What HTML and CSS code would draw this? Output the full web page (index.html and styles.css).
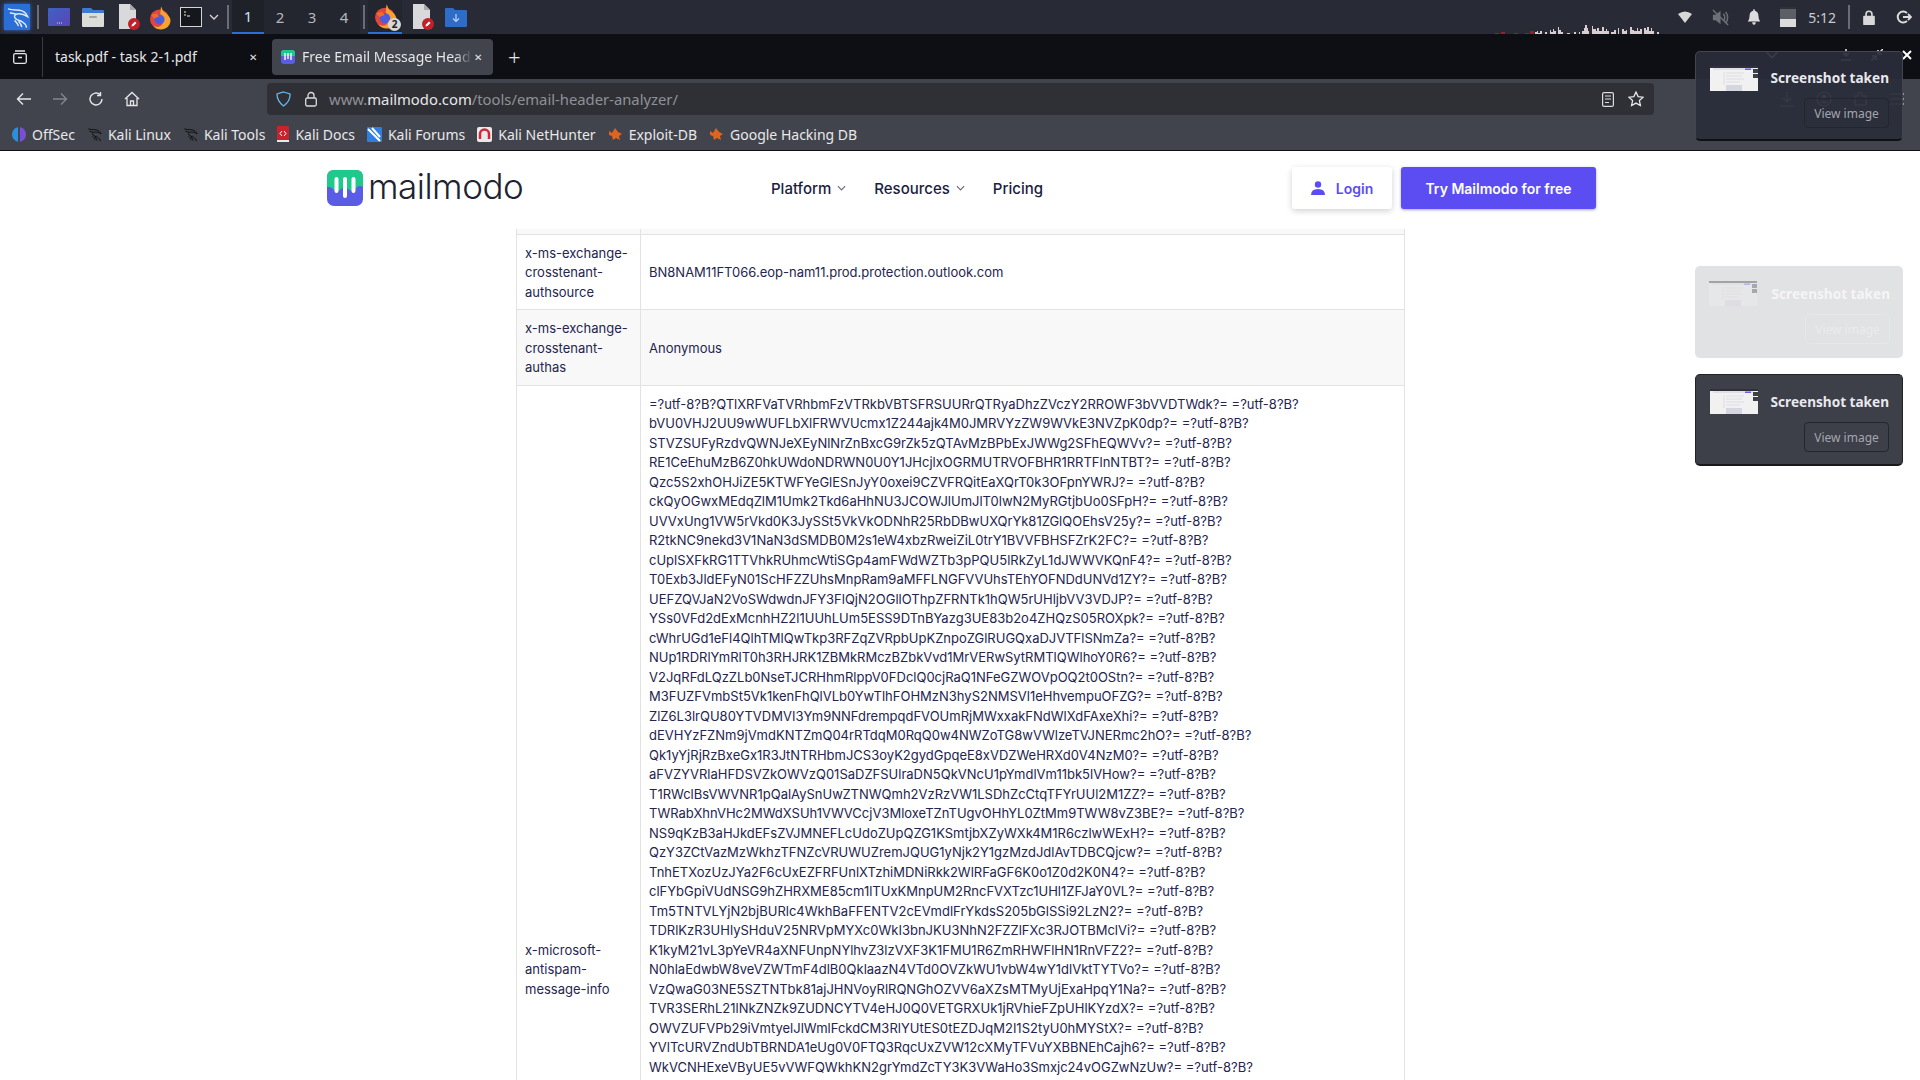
FILE: index.html
```html
<!DOCTYPE html>
<html lang = "en">

<head>
  <meta charset = "UTF-8">
  <meta name = "viewport" content = "width=device-width, initial-scale=1.0">
  <title> Free Email Message Header Analyzer </title>
  <link rel = "stylesheet" href = "styles.css">
</head>

<body>

  <svg class = "defs" width = "0" height = "0">
    <symbol id = "kali" viewBox = "0 0 24 24">
      <path d = "M2 3c5 1.500 8 1 12 1.500 4 .5 7 3 8.500 6.500-3-2-6-3-9-3-3 0-5 1.500-4.500 3.500.5 2.500 5 3.500 8 5 2.500 1.300 4 3.500 4.500 6M4 7c2 .5 4 1 6 1M13 16c1.500 1.500 3 3.500 3.500 6M9 15c2 2 3 3 4 6" fill = "none" stroke = "currentColor" stroke-width = "1.500"/>
    </symbol>
    <symbol id = "firefox" viewBox = "0 0 24 24">
      <circle cx = "11.500" cy = "13.500" r = "9.500" fill = "#e0463c"/>
      <path d = "M13 1c2 3 1 4 4 6 3 2 5.500 5 5.500 8 0 5-4.500 9-9.500 9-3 0-6-1-8-4 3 2 7 2 9-1 2-3 1-7-2-8 .5-3 .5-7 1-10z" fill = "#f7a130"/>
      <circle cx = "11.500" cy = "14" r = "5" fill = "#4d5be0"/>
      <path d = "M3 9c2 0 4-1 6-1l2 3-5 2z" fill = "#f36a2b"/>
    </symbol>
    <symbol id = "doc" viewBox = "0 0 24 28">
      <path d = "M3 1h11l6 6v19H3z" fill = "#d9d9dc"/>
      <path d = "M14 1l6 6h-6z" fill = "#a9a9ad"/>
      <circle cx = "18" cy = "21" r = "6" fill = "#c0202a"/>
      <path d = "M15.500 23.500l.5-2 3-3 1.500 1.500-3 3z" fill = "#fff"/>
    </symbol>
    <symbol id = "caret" viewBox = "0 0 10 6">
      <path d = "M1 1l4 4 4-4" fill = "none" stroke = "currentColor" stroke-width = "1.300"/>
    </symbol>
    <symbol id = "shot" viewBox = "0 0 48 25">
      <rect width = "48" height = "25" fill = "#f1f1f2"/>
      <rect width = "48" height = "2" fill = "#30313a"/>
      <rect x = "3" y = "2.500" width = "40" height = "1" fill = "#d0d0d6"/>
      <rect x = "35" y = "2.500" width = "6" height = "1.500" fill = "#6a5cf0"/>
      <rect x = "43" y = "3" width = "5" height = "4" fill = "#3d3f49"/>
      <rect x = "43" y = "8" width = "5" height = "4" fill = "#3d3f49"/>
      <path d = "M14 6v13M16 7h18M16 10h16M16 13h18M16 16h14" stroke = "#d4d4da" stroke-width = ".7"/>
      <rect x = "16" y = "19" width = "16" height = "6" fill = "#d6d6e0"/>
    </symbol>
  </svg>

  <div class = "panel">
    <div class = "panel-left">
      <div class = "kali-btn"><svg width = "23" height = "23"><use href = "#kali"/></svg></div>
      <span class = "panel-sep sep-first"></span>
      <div class = "launcher">
        <svg width = "22" height = "18" viewBox = "0 0 22 18"><defs><linearGradient id = "desk" x1 = "0" y1 = "0" x2 = "1" y2 = "1"><stop offset = "0" stop-color = "#3d63c4"/><stop offset = "1" stop-color = "#5a45b4"/></linearGradient></defs><rect width = "22" height = "18" rx = "1" fill = "url(#desk)"/><path d = "M9 15h1M11 15h1M13 15h1" stroke = "#ddd"/></svg>
        <svg width = "22" height = "20" viewBox = "0 0 22 20"><path d = "M0 2q0-1 1-1h8l2 2h10q1 0 1 1v3H0z" fill = "#3d7bd0"/><path d = "M0 6h22v13q0 1-1 1H1q-1 0-1-1z" fill = "#dcdcd8"/><rect x = "7" y = "9" width = "8" height = "2" rx = "1" fill = "#a5a5a2"/></svg>
        <svg width = "24" height = "28"><use href = "#doc"/></svg>
        <svg class = "tight" width = "24" height = "25"><use href = "#firefox"/></svg>
        <svg class = "tight" width = "22" height = "20" viewBox = "0 0 22 20"><rect x = ".5" y = ".5" width = "21" height = "19" fill = "#16171c" stroke = "#d5d5d5"/><path d = "M4 5h2M4 8h2M7 9h3" stroke = "#eee" stroke-width = "1.200"/></svg>
        <svg class = "panel-caret" width = "10" height = "6"><use href = "#caret"/></svg>
      </div>
      <span class = "panel-sep sep-mid"></span>
      <div class = "workspaces">
        <span class = "ws ws-on">1</span>
        <span class = "ws">2</span>
        <span class = "ws">3</span>
        <span class = "ws">4</span>
      </div>
      <span class = "panel-sep"></span>
      <div class = "tasks">
        <div class = "task task-on">
          <svg width = "25" height = "26"><use href = "#firefox"/></svg>
          <span class = "task-count">2</span>
        </div>
        <div class = "task"><svg width = "24" height = "28"><use href = "#doc"/></svg></div>
        <div class = "task">
          <svg width = "22" height = "20" viewBox = "0 0 22 20"><path d = "M0 2q0-1 1-1h7l2 2h11q1 0 1 1v15q0 1-1 1H1q-1 0-1-1z" fill = "#2f6cc8"/><path d = "M11 7v7M8 11.500l3 3 3-3" fill = "none" stroke = "#bcd4f2" stroke-width = "1.200"/></svg>
        </div>
      </div>
    </div>

    <div class = "panel-right">
      <svg class = "net-graph" width = "170" height = "10" viewBox = "0 0 170 10">
        <path d = "M0 9h4v1H0zM6 8h4v2H6zM19 9h4v1h-4zM30 9h4v1h-4zM35 7h4v3h-4z" fill = "#a01c28"/>
        <path d = "M40 10V8h2V7h1v2h2V7h2v3h3V8h2v2h3V6h1v2h2V5h1v2h2v3h2V3h1v3h2v2h2v2h4V9h3v1h4V8h2v2h3V8h1v2h2V7h2V4h1V1h2v3h1v3h1v3h3V2h1v3h3v2h1V4h2v3h3V3h2v4h2V5h1v2h2v3h2V8h3V6h2v4h2V4h1v6h3V5h2v2h2V6h1v4h3V3h2v3h2V7h3V4h1v3h2V5h2v5h2V4h2v2h1V3h2v4h2V4h1v3h2v3h3V8h2v2z" fill = "#d9cdcf"/>
      </svg>
      <svg class = "tray-wifi" width = "14" height = "12" viewBox = "0 0 14 12"><path d = "M0 3q7-5 14 0L7 12z" fill = "#d8d8d8"/></svg>
      <svg class = "tray-mute" width = "19" height = "19" viewBox = "0 0 20 20"><path d = "M2 7h3l5-4v14l-5-4H2z" fill = "#6e7078"/><path d = "M13 6q3 4 0 8M15.500 4q4 6 0 12M2 2l16 16" fill = "none" stroke = "#6e7078" stroke-width = "1.500"/></svg>
      <svg class = "tray-bell" width = "14" height = "16" viewBox = "0 0 14 18"><path d = "M7 0q1 0 1 2 4 1 4 6 0 4 2 6H0q2-2 2-6 0-5 4-6 0-2 1-2zM5 15h4q0 3-2 3t-2-3z" fill = "#dcdcdc"/></svg>
      <div class = "battery"><span></span></div>
      <span class = "clock">5:12</span>
      <span class = "panel-sep tray-sep"></span>
      <svg class = "tray-lock" width = "14" height = "15" viewBox = "0 0 14 18"><path d = "M3.500 8V5a3.500 3.500 0 0 1 7 0v3" fill = "none" stroke = "#d8d8d8" stroke-width = "2"/><rect y = "7" width = "14" height = "11" rx = "1" fill = "#d8d8d8"/></svg>
      <svg class = "tray-out" width = "16" height = "14" viewBox = "0 0 16 14"><path d = "M11 3a5.500 5.500 0 1 0 0 8" fill = "none" stroke = "#dcdcdc" stroke-width = "2"/><path d = "M7 7h8M12 4l3 3-3 3" fill = "none" stroke = "#dcdcdc" stroke-width = "1.800"/></svg>
    </div>
  </div>

  <div class = "tabbar">
    <div class = "tab-tool">
      <svg width = "14" height = "14" viewBox = "0 0 14 14"><rect x = ".7" y = "3.700" width = "12.600" height = "9.600" rx = "1.500" fill = "none" stroke = "#e6e6e8" stroke-width = "1.300"/><path d = "M2 1h10M5 7.500h4" stroke = "#e6e6e8" stroke-width = "1.300"/></svg>
    </div>
    <div class = "tab">
      <span class = "tab-title"> task.pdf - task 2-1.pdf </span>
      <span class = "tab-x"> &#10005; </span>
    </div>
    <div class = "tab tab-on">
      <svg class = "fav" width = "14" height = "14" viewBox = "0 0 14 14"><rect width = "14" height = "14" rx = "3" fill = "#5a5ce6"/><path d = "M0 3q0-3 3-3h8q3 0 3 3v3H0z" fill = "#1fc98c"/><path d = "M4 3v7M7 3v6M10 3v7" stroke = "#fff" stroke-width = "1.400"/></svg>
      <span class = "tab-title tab-fade"> Free Email Message Head </span>
      <span class = "tab-x"> &#10005; </span>
    </div>
    <span class = "tab-plus"> + </span>
    <div class = "win-btns">
      <svg class = "win-caret" width = "14" height = "8"><use href = "#caret"/></svg>
      <svg class = "win-min" width = "12" height = "12" viewBox = "0 0 12 12"><path d = "M6 0v7M3 4l3 3 3-3M1 11h10" fill = "none" stroke = "#e6e6e8" stroke-width = "1.500"/></svg>
      <svg class = "win-max" width = "12" height = "12" viewBox = "0 0 12 12"><path d = "M12 0L7 5M7 1v4h4M0 12l5-5M1 7h4v4" fill = "none" stroke = "#e6e6e8" stroke-width = "1.500"/></svg>
      <svg class = "win-max" width = "10" height = "10" viewBox = "0 0 10 10"><path d = "M1 1l8 8M9 1L1 9" stroke = "#fff" stroke-width = "2"/></svg>
    </div>
  </div>

  <div class = "navbar">
    <svg class = "nav-ic" width = "16" height = "14" viewBox = "0 0 16 14"><path d = "M15 7H1.500M7 1.500L1.500 7 7 12.500" fill = "none" stroke = "#e6e6e8" stroke-width = "1.400"/></svg>
    <svg class = "nav-ic" width = "16" height = "14" viewBox = "0 0 16 14"><path d = "M1 7h13.500M9 1.500L14.500 7 9 12.500" fill = "none" stroke = "#84858c" stroke-width = "1.400"/></svg>
    <svg class = "nav-ic" width = "16" height = "16" viewBox = "0 0 16 16"><path d = "M14 8a6 6 0 1 1-2-4.500M12.500 1v3.500H9" fill = "none" stroke = "#e6e6e8" stroke-width = "1.400"/></svg>
    <svg class = "nav-ic" width = "16" height = "16" viewBox = "0 0 16 16"><path d = "M1 8l7-6.500L15 8M3 7v7.500h10V7M6.500 14.500V10h3v4.500" fill = "none" stroke = "#e6e6e8" stroke-width = "1.300"/></svg>
    <div class = "urlbar">
      <svg width = "15" height = "16" viewBox = "0 0 15 16"><path d = "M7.500 1L14 3q.5 7-6.500 12Q1 10 1 3z" fill = "none" stroke = "#66b8ee" stroke-width = "1.300"/></svg>
      <svg class = "lock" width = "12" height = "16" viewBox = "0 0 12 16"><path d = "M3 7V4.500a3 3 0 0 1 6 0V7" fill = "none" stroke = "#dcdcdf" stroke-width = "1.300"/><rect x = ".7" y = "7" width = "10.600" height = "8" rx = "1.500" fill = "none" stroke = "#dcdcdf" stroke-width = "1.300"/></svg>
      <span class = "url"> www.<b class = "url-host">mailmodo.com</b>/tools/email-header-analyzer/ </span>
      <svg class = "url-end" width = "12" height = "15" viewBox = "0 0 12 15"><rect x = ".6" y = ".6" width = "10.800" height = "13.800" rx = "1.500" fill = "none" stroke = "#dcdcdf" stroke-width = "1.200"/><path d = "M3 4h6M3 7h6M3 10.500h4" stroke = "#dcdcdf" stroke-width = "1.200"/></svg>
      <svg class = "star" width = "16" height = "16" viewBox = "0 0 16 16"><path d = "M8 1l2.100 4.600 5 .6-3.700 3.400 1 5L8 12.100 3.600 14.600l1-5L.9 6.200l5-.6z" fill = "none" stroke = "#e6e6e8" stroke-width = "1.300"/></svg>
    </div>
    <div class = "nav-right">
      <svg width = "16" height = "16" viewBox = "0 0 16 16"><path d = "M8 1v10M4 7l4 4 4-4M1 15h14" fill = "none" stroke = "#e6e6e8" stroke-width = "1.200"/></svg>
      <svg width = "16" height = "16" viewBox = "0 0 16 16"><circle cx = "8" cy = "8" r = "7" fill = "none" stroke = "#e6e6e8" stroke-width = "1.200"/><circle cx = "8" cy = "6" r = "2.500" fill = "#e6e6e8"/><path d = "M3.500 12q4.500-3.500 9 0" fill = "#e6e6e8"/></svg>
      <svg width = "16" height = "16" viewBox = "0 0 16 16"><path d = "M2 5h3V3a2 2 0 0 1 4 0v2h4v9H2z" fill = "none" stroke = "#e6e6e8" stroke-width = "1.200"/></svg>
      <svg width = "14" height = "12" viewBox = "0 0 14 12"><path d = "M0 1h14M0 6h14M0 11h14" stroke = "#e6e6e8" stroke-width = "1.200"/></svg>
    </div>
  </div>

  <div class = "bookmarks">
    <span class = "mark"><svg width = "14" height = "15" viewBox = "0 0 14 15"><path d = "M6 0v15Q0 13 0 7.500T6 0z" fill = "#2b8fdc"/><path d = "M8 0v15q6-2 6-7.500T8 0z" fill = "#7a4fd8"/></svg> OffSec </span>
    <span class = "mark"><svg class = "k-ic" width = "15" height = "15"><use href = "#kali"/></svg> Kali Linux </span>
    <span class = "mark"><svg class = "k-ic" width = "15" height = "15"><use href = "#kali"/></svg> Kali Tools </span>
    <span class = "mark"><svg width = "12" height = "16" viewBox = "0 0 12 16"><rect width = "12" height = "15" rx = "1" fill = "#c8232c"/><path d = "M0 14h12v2H0z" fill = "#e8e8e8"/><path d = "M5 5L3 7.500 5 10M7 5l2 2.500L7 10" fill = "none" stroke = "#fff"/></svg> Kali Docs </span>
    <span class = "mark"><svg width = "15" height = "15" viewBox = "0 0 15 15"><rect width = "15" height = "15" rx = "1" fill = "#2f7fe0"/><path d = "M1 2l12 12M5 1l8 9" stroke = "#fff" stroke-width = "2"/></svg> Kali Forums </span>
    <span class = "mark"><svg width = "15" height = "15" viewBox = "0 0 15 15"><rect width = "15" height = "15" rx = "2" fill = "#e9e9e9"/><path d = "M3 12V7a4.500 4.500 0 0 1 9 0v5" fill = "none" stroke = "#d02838" stroke-width = "2.500"/></svg> Kali NetHunter </span>
    <span class = "mark"><svg width = "15" height = "14" viewBox = "0 0 15 14"><path d = "M1 4l3 2 3-5 3 4 4 2-3 2 1 4-4-2-3 2-1-4-3-1z" fill = "#e0641e"/></svg> Exploit-DB </span>
    <span class = "mark"><svg width = "15" height = "14" viewBox = "0 0 15 14"><path d = "M1 4l3 2 3-5 3 4 4 2-3 2 1 4-4-2-3 2-1-4-3-1z" fill = "#e0641e"/></svg> Google Hacking DB </span>
  </div>

  <div class = "page">
    <div class = "site-head">
      <div class = "logo">
        <svg width = "36" height = "36" viewBox = "0 0 36 36">
          <rect width = "36" height = "36" rx = "7" fill = "#5a5ce6"/>
          <path d = "M0 17V7q0-7 7-7h22q7 0 7 7v10c-3-2-5-1-7 1-3 3-6 3-8 1s-5-2-7 0-6 2-8 0-4-2-6-2z" fill = "#1fc98c"/>
          <path d = "M9.500 9v12M18 9v17M26.500 9v12" stroke = "#fff" stroke-width = "4" stroke-linecap = "round"/>
        </svg>
        <span class = "logo-text"> mailmodo </span>
      </div>
      <nav class = "site-nav">
        <a class = "site-link"> Platform <svg width = "9" height = "6"><use href = "#caret"/></svg></a>
        <a class = "site-link"> Resources <svg width = "9" height = "6"><use href = "#caret"/></svg></a>
        <a class = "site-link"> Pricing </a>
      </nav>
      <div class = "head-btns">
        <a class = "btn-login">
          <svg width = "14" height = "14" viewBox = "0 0 14 14"><circle cx = "7" cy = "3.500" r = "3.200" fill = "#5b4df2"/><path d = "M0 14q0-6 7-6t7 6z" fill = "#5b4df2"/></svg>
          Login
        </a>
        <a class = "btn-try"> Try Mailmodo for free </a>
      </div>
    </div>

    <table class = "headers">
      <tr class = "row-alt row-cut">
        <td class = "key"></td>
        <td></td>
      </tr>
      <tr>
        <td class = "key"> x-ms-exchange-crosstenant-authsource </td>
        <td> BN8NAM11FT066.eop-nam11.prod.protection.outlook.com </td>
      </tr>
      <tr class = "row-alt">
        <td class = "key"> x-ms-exchange-crosstenant-authas </td>
        <td> Anonymous </td>
      </tr>
      <tr class = "row-long">
        <td class = "key"> x-microsoft-antispam-message-info </td>
        <td class = "val-top">
          =?utf-8?B?QTlXRFVaTVRhbmFzVTRkbVBTSFRSUURrQTRyaDhzZVczY2RROWF3bVVDTWdk?= =?utf-8?B?<br>
          bVU0VHJ2UU9wWUFLbXlFRWVUcmx1Z244ajk4M0JMRVYzZW9WVkE3NVZpK0dp?= =?utf-8?B?<br>
          STVZSUFyRzdvQWNJeXEyNlNrZnBxcG9rZk5zQTAvMzBPbExJWWg2SFhEQWVv?= =?utf-8?B?<br>
          RE1CeEhuMzB6Z0hkUWdoNDRWN0U0Y1JHcjlxOGRMUTRVOFBHR1RRTFlnNTBT?= =?utf-8?B?<br>
          Qzc5S2xhOHJiZE5KTWFYeGlESnJyY0oxei9CZVFRQitEaXQrT0k3OFpnYWRJ?= =?utf-8?B?<br>
          ckQyOGwxMEdqZlM1Umk2Tkd6aHhNU3JCOWJlUmJlT0lwN2MyRGtjbUo0SFpH?= =?utf-8?B?<br>
          UVVxUng1VW5rVkd0K3JySSt5VkVkODNhR25RbDBwUXQrYk81ZGlQOEhsV25y?= =?utf-8?B?<br>
          R2tkNC9nekd3V1NaN3dSMDB0M2s1eW4xbzRweiZiL0trY1BVVFBHSFZrK2FC?= =?utf-8?B?<br>
          cUplSXFkRG1TTVhkRUhmcWtiSGp4amFWdWZTb3pPQU5lRkZyL1dJWWVKQnF4?= =?utf-8?B?<br>
          T0Exb3JldEFyN01ScHFZZUhsMnpRam9aMFFLNGFVVUhsTEhYOFNDdUNVd1ZY?= =?utf-8?B?<br>
          UEFZQVJaN2VoSWdwdnJFY3FlQjN2OGllOThpZFRNTk1hQW5rUHljbVV3VDJP?= =?utf-8?B?<br>
          YSs0VFd2dExMcnhHZ2l1UUhLUm5ESS9DTnBYazg3UE83b2o4ZHQzS05ROXpk?= =?utf-8?B?<br>
          cWhrUGd1eFl4QlhTMlQwTkp3RFZqZVRpbUpKZnpoZGlRUGQxaDJVTFlSNmZa?= =?utf-8?B?<br>
          NUp1RDRlYmRlT0h3RHJRK1ZBMkRMczBZbkVvd1MrVERwSytRMTlQWlhoY0R6?= =?utf-8?B?<br>
          V2JqRFdLQzZLb0NseTJCRHhmRlppV0FDclQ0cjRaQ1NFeGZWOVpOQ2t0OStn?= =?utf-8?B?<br>
          M3FUZFVmbSt5Vk1kenFhQlVLb0YwTlhFOHMzN3hyS2NMSVl1eHhvempuOFZG?= =?utf-8?B?<br>
          ZlZ6L3lrQU80YTVDMVI3Ym9NNFdrempqdFVOUmRjMWxxakFNdWlXdFAxeXhi?= =?utf-8?B?<br>
          dEVHYzFZNm9jVmdKNTZmQ04rRTdqM0RqQ0w4NWZoTG8wVWlzeTVJNERmc2hO?= =?utf-8?B?<br>
          Qk1yYjRjRzBxeGx1R3JtNTRHbmJCS3oyK2gydGpqeE8xVDZWeHRXd0V4NzM0?= =?utf-8?B?<br>
          aFVZYVRlaHFDSVZkOWVzQ01SaDZFSUlraDN5QkVNcU1pYmdlVm11bk5lVHow?= =?utf-8?B?<br>
          T1RWclBsVWVNR1pQalAySnUwZTNWQmh2VzRzVW1LSDhZcCtqTFYrUUl2M1ZZ?= =?utf-8?B?<br>
          TWRabXhnVHc2MWdXSUh1VWVCcjV3MloxeTZnTUgvOHhYL0ZtMm9TWW8vZ3BE?= =?utf-8?B?<br>
          NS9qKzB3aHJkdEFsZVJMNEFLcUdoZUpQZG1KSmtjbXZyWXk4M1R6czlwWExH?= =?utf-8?B?<br>
          QzY3ZCtVazMzWkhzTFNZcVRUWUZremJQUG1yNjk2Y1gzMzdJdlAvTDBCQjcw?= =?utf-8?B?<br>
          TnhETXozUzJYa2F6cUxEZFRFUnlXTzhiMDNiRkk2WlRFaGF6K0o1Z0d2K0N4?= =?utf-8?B?<br>
          clFYbGpiVUdNSG9hZHRXME85cm1lTUxKMnpUM2RncFVXTzc1UHl1ZFJaY0VL?= =?utf-8?B?<br>
          Tm5TNTVLYjN2bjBURlc4WkhBaFFENTV2cEVmdlFrYkdsS205bGlSSi92LzN2?= =?utf-8?B?<br>
          TDRlKzR3UHlySHduV25NRVpMYXc0WkI3bnJKU3NhN2FZZlFXc3RJOTBMclVi?= =?utf-8?B?<br>
          K1kyM21vL3pYeVR4aXNFUnpNYlhvZ3lzVXF3K1FMU1R6ZmRHWFlHN1RnVFZ2?= =?utf-8?B?<br>
          N0hlaEdwbW8veVZWTmF4dlB0QklaazN4VTd0OVZkWU1vbW4wY1dlVktTYTVo?= =?utf-8?B?<br>
          VzQwaG03NE5SZTNTbk81ajJHNVoyRlRQNGhOZVV6aXZsMTMyUjExaHpqY1Na?= =?utf-8?B?<br>
          TVR3SERhL21lNkZNZk9ZUDNCYTV4eHJ0Q0VETGRXUk1jRVhieFZpUHlKYzdX?= =?utf-8?B?<br>
          OWVZUFVPb29iVmtyelJlWmlFckdCM3RlYUtES0tEZDJqM2I1S2tyU0hMYStX?= =?utf-8?B?<br>
          YVlTcURVZndUbTBRNDA1eUg0V0FTQ3RqcUxZVW12cXMyTFVuYXBBNEhCajh6?= =?utf-8?B?<br>
          WkVCNHExeVByUE5vVWFQWkhKN2grYmdZcTY3K3VWaHo3Smxjc24vOGZwNzUw?= =?utf-8?B?
        </td>
      </tr>
    </table>
  </div>

  <div class = "toast toast-dim">
    <svg class = "shot" width = "48" height = "25"><use href = "#shot"/></svg>
    <div class = "toast-body">
      <span class = "toast-title"> Screenshot taken </span>
      <span class = "toast-btn"> View image </span>
    </div>
  </div>

  <div class = "toast toast-fade">
    <svg class = "shot" width = "48" height = "25"><use href = "#shot"/></svg>
    <div class = "toast-body">
      <span class = "toast-title"> Screenshot taken </span>
      <span class = "toast-btn"> View image </span>
    </div>
  </div>

  <div class = "toast toast-solid">
    <svg class = "shot" width = "48" height = "25"><use href = "#shot"/></svg>
    <div class = "toast-body">
      <span class = "toast-title"> Screenshot taken </span>
      <span class = "toast-btn"> View image </span>
    </div>
  </div>

</body>

</html>
```

FILE: styles.css
```css
*
    {
    margin: 0;
    padding: 0;
    box-sizing: border-box;
    }

:root
    {
    --pnl: #282a35;
    --tabs: #0e0f14;
    --bar: #42444d;
    --url: #2f3036;
    --ink: #24244e;
    --line: #e2e2e2;
    --alt: #f8f8f8;
    --vio: #5b4df2;
    }

body
    {
    width: 1920px;
    height: 1080px;
    overflow: hidden;
    position: relative;
    display: flex;
    flex-direction: column;
    background-color: #fff;
    font-family: "Noto Sans", sans-serif;
    }

.defs
    {
    position: absolute;
    }

svg
    {
    flex: none;
    }

/* desktop panel */

.panel
    {
    height: 34px;
    display: flex;
    justify-content: space-between;
    background-color: var(--pnl);
    color: #d5d5d8;
    }

.panel-left
    {
    display: flex;
    align-items: center;
    padding-left: 4px;
    }

.kali-btn
    {
    width: 26px;
    height: 26px;
    display: flex;
    align-items: center;
    justify-content: center;
    background-color: #2a6fd6;
    box-shadow: 0 0 4px #2a6fd6;
    color: #dfe8f5;
    }

.panel-sep
    {
    width: 2px;
    height: 24px;
    margin: 0 3px;
    background-color: #6b6d75;
    }

.sep-first
    {
    margin: 0 9px 0 7px;
    }

.sep-mid
    {
    margin: 0 3px 0 8px;
    }

.launcher
    {
    display: flex;
    align-items: center;
    gap: 12px;
    }

.tight
    {
    margin-left: -4px;
    }

.panel-caret
    {
    margin-left: -5px;
    }

.workspaces
    {
    display: flex;
    height: 34px;
    background-color: #23252f;
    }

.ws
    {
    width: 32px;
    display: flex;
    align-items: center;
    justify-content: center;
    font-size: 15px;
    color: #b5b7bd;
    }

.ws-on
    {
    background-color: #1f2128;
    border-bottom: 2px solid #2a6fd6;
    color: #cfe0f5;
    }

.tasks
    {
    display: flex;
    align-items: center;
    gap: 11px;
    }

.task
    {
    height: 34px;
    position: relative;
    display: flex;
    align-items: center;
    }

.task-on
    {
    width: 34px;
    margin-right: -3px;
    justify-content: center;
    background-color: #23252f;
    border-bottom: 2px solid #2a6fd6;
    }

.task-count
    {
    position: absolute;
    right: 1px;
    bottom: 1px;
    width: 13px;
    height: 13px;
    border-radius: 50%;
    background-color: #d8d8d8;
    color: #222;
    font-size: 10px;
    font-weight: 700;
    line-height: 13px;
    text-align: center;
    }

.panel-right
    {
    display: flex;
    align-items: center;
    padding-right: 8px;
    position: relative;
    }

.net-graph
    {
    position: absolute;
    right: 255px;
    bottom: 0;
    }

.tray-mute
    {
    margin-left: 19px;
    }

.tray-bell
    {
    margin-left: 17px;
    }

.battery
    {
    width: 16px;
    height: 20px;
    margin-left: 19px;
    background-color: #5d5f66;
    position: relative;
    border-top: 2px solid #2f3138;
    }

.battery span
    {
    position: absolute;
    left: 0;
    right: 0;
    bottom: 0;
    height: 8px;
    background-color: #dcdcdc;
    }

.clock
    {
    margin-left: 12px;
    font-size: 14px;
    color: #c8cad0;
    }

.tray-sep
    {
    margin: 0 0 0 12px;
    }

.tray-lock
    {
    margin-left: 12px;
    }

.tray-out
    {
    margin-left: 20px;
    }

/* browser tabs */

.tabbar
    {
    height: 45px;
    display: flex;
    align-items: center;
    background-color: var(--tabs);
    color: #e6e6e8;
    font-size: 14px;
    position: relative;
    }

.tab-tool
    {
    width: 43px;
    height: 40px;
    display: flex;
    align-items: center;
    padding-left: 13px;
    border-right: 1px solid #3a3b42;
    }

.tab
    {
    height: 36px;
    width: 229px;
    display: flex;
    align-items: center;
    padding: 0 13px 0 12px;
    border-radius: 4px;
    }

.tab-on
    {
    width: 221px;
    padding: 0 9px;
    background-color: var(--bar);
    }

.tab-title
    {
    flex: 1;
    white-space: nowrap;
    }

.tab-fade
    {
    -webkit-mask-image: linear-gradient(to right, #000 90%, transparent);
    mask-image: linear-gradient(to right, #000 90%, transparent);
    }

.fav
    {
    margin-right: 7px;
    }

.tab-x
    {
    width: 12px;
    font-size: 10px;
    text-align: center;
    }

.tab-plus
    {
    margin-left: 15px;
    font-size: 22px;
    font-weight: 300;
    line-height: 1;
    }

.win-btns
    {
    position: absolute;
    right: 8px;
    top: 15px;
    display: flex;
    align-items: center;
    }

.win-min
    {
    margin-left: 61px;
    }

.win-max
    {
    margin-left: 19px;
    }

/* browser toolbar */

.navbar
    {
    height: 42px;
    display: flex;
    align-items: center;
    padding: 0 0 2px 16px;
    background-color: var(--bar);
    }

.nav-ic
    {
    margin-right: 20px;
    }

.urlbar
    {
    width: 1387px;
    height: 32px;
    margin-left: 107px;
    display: flex;
    align-items: center;
    padding: 0 10px 0 9px;
    border-radius: 4px;
    background-color: var(--url);
    }

.lock
    {
    margin-left: 14px;
    }

.url
    {
    flex: 1;
    margin-left: 12px;
    font-size: 14.800px;
    color: #8f9096;
    }

.url-host
    {
    font-weight: 400;
    color: #e6e6e8;
    }

.star
    {
    margin-left: 14px;
    }

.nav-right
    {
    display: flex;
    align-items: center;
    gap: 21px;
    margin-left: 125px;
    }

/* bookmarks */

.bookmarks
    {
    height: 30px;
    display: flex;
    align-items: center;
    gap: 12px;
    padding: 0 0 3px 12px;
    background-color: var(--bar);
    border-bottom: 1px solid #0e0f14;
    color: #e8e8ea;
    font-size: 14px;
    }

.mark
    {
    display: flex;
    align-items: center;
    gap: 6px;
    white-space: nowrap;
    }

.k-ic
    {
    color: #0d0d0d;
    }

/* page */

.page
    {
    flex: 1;
    overflow: hidden;
    font-family: Inter, sans-serif;
    color: var(--ink);
    }

.site-head
    {
    height: 78px;
    display: flex;
    align-items: center;
    padding: 0 324px 4px 327px;
    }

.logo
    {
    width: 444px;
    display: flex;
    align-items: center;
    gap: 5px;
    }

.logo-text
    {
    margin-top: -4px;
    font-size: 35px;
    font-weight: 300;
    letter-spacing: -.5px;
    color: #202230;
    }

.site-nav
    {
    display: flex;
    align-items: center;
    gap: 28px;
    flex: 1;
    }

.site-link
    {
    display: flex;
    align-items: center;
    gap: 6px;
    font-size: 15px;
    font-weight: 500;
    color: #1c1c40;
    }

.site-link svg
    {
    color: #6a6a80;
    }

.head-btns
    {
    display: flex;
    gap: 9px;
    }

.btn-login, .btn-try
    {
    height: 42px;
    display: flex;
    align-items: center;
    justify-content: center;
    border-radius: 3px;
    font-size: 14px;
    font-weight: 600;
    }

.btn-login
    {
    width: 100px;
    gap: 11px;
    background-color: #fff;
    color: var(--vio);
    box-shadow: 0 2px 6px rgba(0, 0, 0, .18);
    }

.btn-try
    {
    width: 195px;
    background-color: var(--vio);
    color: #fff;
    box-shadow: 0 1px 3px rgba(40, 30, 140, .4);
    }

.headers
    {
    width: 889px;
    margin-left: 516px;
    border-collapse: collapse;
    table-layout: fixed;
    font-size: 13px;
    line-height: 19.500px;
    }

.headers td
    {
    padding: 9px 8px 7px;
    border: 1px solid var(--line);
    vertical-align: middle;
    overflow-wrap: anywhere;
    }

.headers .key
    {
    width: 124px;
    }

.row-alt
    {
    background-color: var(--alt);
    }

.headers .row-cut td
    {
    height: 5px;
    padding: 0;
    border-top: 0;
    }

.row-long
    {
    height: 1168px;
    }

.headers .val-top
    {
    vertical-align: top;
    white-space: nowrap;
    }

/* screenshot notices */

.toast
    {
    position: absolute;
    right: 17px;
    width: 208px;
    height: 92px;
    display: flex;
    padding: 14px 13px 0 14px;
    border-radius: 5px;
    }

.toast-dim
    {
    top: 51px;
    height: 90px;
    background-color: rgba(42, 44, 58, .93);
    border: 1px solid #43454f;
    border-bottom: 2px solid #111;
    }

.toast-fade
    {
    top: 266px;
    padding-top: 15px;
    background-color: #e1e2e4;
    color: #f4f4f5;
    }

.toast-fade .shot
    {
    opacity: .35;
    }

.toast-solid
    {
    top: 374px;
    background-color: #3d3f49;
    border: 1px solid #222;
    border-bottom: 2px solid #1a1a1e;
    }

.toast-fade .toast-body, .toast-solid .toast-body
    {
    margin-top: 1px;
    }

.toast-body
    {
    flex: 1;
    display: flex;
    flex-direction: column;
    align-items: flex-end;
    }

.toast-title
    {
    font-size: 13.600px;
    font-weight: 700;
    line-height: 24px;
    color: #e8e9ee;
    white-space: nowrap;
    }

.toast-fade .toast-title
    {
    color: #f5f5f6;
    }

.toast-btn
    {
    width: 85px;
    height: 30px;
    margin-top: 8px;
    display: flex;
    align-items: center;
    justify-content: center;
    border: 1px solid #24252d;
    border-radius: 4px;
    font-size: 12px;
    color: #a3a5ad;
    }

.toast-fade .toast-btn
    {
    border-color: #e6e7e9;
    color: #ebebed;
    }
```
